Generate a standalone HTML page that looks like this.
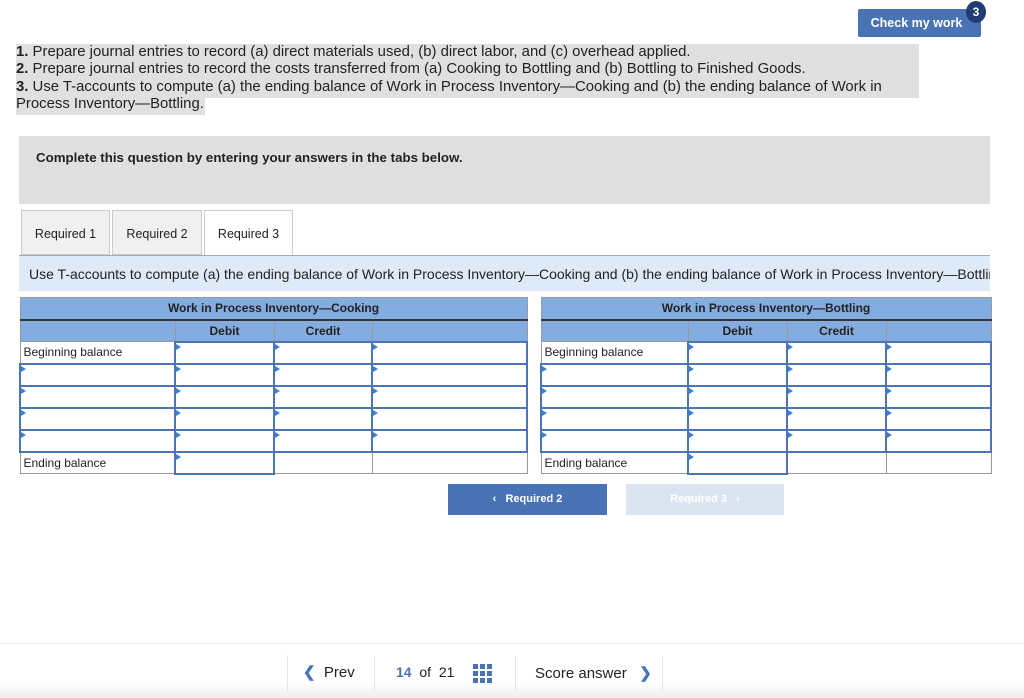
<!DOCTYPE html>
<html><head><meta charset="utf-8"><style>
*{box-sizing:border-box;margin:0;padding:0}
body{width:1024px;height:698px;background:#fff;font-family:"Liberation Sans",Arial,sans-serif;color:#222;position:relative;overflow:hidden}
.abs{position:absolute}
.btn{left:858px;top:9px;width:123px;height:28px;background:#4a73b5;color:#fff;font-weight:bold;font-size:12.5px;border-radius:2px;text-align:center;line-height:28px;padding-right:6px}
.badge{left:966px;top:1px;width:20px;height:22px;border-radius:50%;background:#1f3d73;color:#fff;font-size:12px;font-weight:bold;text-align:center;line-height:22px}
.qbg1{left:16px;top:44px;width:903px;height:54px;background:#e0e0e0}
.qbg2{left:16px;top:98px;width:189px;height:17px;background:#e0e0e0}
.q{left:16px;top:44px;font-size:14.9px;line-height:17.3px;white-space:nowrap}
.gray{left:19px;top:136px;width:971px;height:68px;background:#e0e0e0;border-bottom:1px solid #ddd}
.gray b{position:absolute;left:17px;top:14px;font-size:13.3px}
.tab{top:210px;height:45px;border:1px solid #ccc;background:#f0f0f0;font-size:12.5px;text-align:center;line-height:46px}
.inst{left:19px;top:255px;width:971px;height:36px;background:#deeaf7;border-top:1px solid #aaa;font-size:14px;padding-left:10px;line-height:36px;white-space:nowrap;overflow:hidden}
table{position:absolute;border-collapse:collapse;table-layout:fixed;font-size:12px}
td{height:22px;border:1px solid #999;padding:0;position:relative}
.h td{background:#85ace0;font-weight:bold;text-align:center;border-color:#999}
.h1 td{border-bottom:2px solid #333}
.l{padding-left:3px}
.i{border:2px solid #4d74b4;background:#fff}
.i:before{content:"";position:absolute;left:0;top:1px;border-left:5px solid #3a7fd5;border-top:3px solid transparent;border-bottom:3px solid transparent}
.nav{top:484px;height:31px;color:#fff;font-size:11px;font-weight:bold;text-align:center;line-height:31px}
.foot{left:0;top:643px;width:1024px;height:55px;border-top:1px solid #eee;background:linear-gradient(#fff 70%,#eee)}
.sep{top:655px;width:1px;height:36px;background:#e5e5e5}
</style></head><body>
<div class="abs btn">Check my work</div><div class="abs badge">3</div>
<div class="abs qbg1"></div><div class="abs qbg2"></div>
<div class="abs q"><b>1.</b> Prepare journal entries to record (a) direct materials used, (b) direct labor, and (c) overhead applied.<br><b>2.</b> Prepare journal entries to record the costs transferred from (a) Cooking to Bottling and (b) Bottling to Finished Goods.<br><b>3.</b> Use T-accounts to compute (a) the ending balance of Work in Process Inventory—Cooking and (b) the ending balance of Work in<br>Process Inventory—Bottling.</div>
<div class="abs gray"><b>Complete this question by entering your answers in the tabs below.</b></div>
<div class="abs tab" style="left:21px;width:89px">Required 1</div>
<div class="abs tab" style="left:112px;width:90px">Required 2</div>
<div class="abs tab" style="left:204px;width:89px;background:#fff;border-bottom:none;height:46px">Required 3</div>
<div class="abs inst">Use T-accounts to compute (a) the ending balance of Work in Process Inventory—Cooking and (b) the ending balance of Work in Process Inventory—Bottling.</div>

<table style="left:19px;top:297px;width:507px">
<colgroup><col style="width:155px"><col style="width:99px"><col style="width:98px"><col style="width:155px"></colgroup>
<tr class="h h1"><td colspan="4">Work in Process Inventory—Cooking</td></tr>
<tr class="h"><td></td><td>Debit</td><td>Credit</td><td></td></tr>
<tr><td class="l">Beginning balance</td><td class="i"></td><td class="i"></td><td class="i"></td></tr>
<tr><td class="i"></td><td class="i"></td><td class="i"></td><td class="i"></td></tr>
<tr><td class="i"></td><td class="i"></td><td class="i"></td><td class="i"></td></tr>
<tr><td class="i"></td><td class="i"></td><td class="i"></td><td class="i"></td></tr>
<tr><td class="i"></td><td class="i"></td><td class="i"></td><td class="i"></td></tr>
<tr><td class="l">Ending balance</td><td class="i"></td><td></td><td></td></tr>
</table>
<table style="left:540px;top:297px;width:450px">
<colgroup><col style="width:147px"><col style="width:99px"><col style="width:99px"><col style="width:105px"></colgroup>
<tr class="h h1"><td colspan="4">Work in Process Inventory—Bottling</td></tr>
<tr class="h"><td></td><td>Debit</td><td>Credit</td><td></td></tr>
<tr><td class="l">Beginning balance</td><td class="i"></td><td class="i"></td><td class="i"></td></tr>
<tr><td class="i"></td><td class="i"></td><td class="i"></td><td class="i"></td></tr>
<tr><td class="i"></td><td class="i"></td><td class="i"></td><td class="i"></td></tr>
<tr><td class="i"></td><td class="i"></td><td class="i"></td><td class="i"></td></tr>
<tr><td class="i"></td><td class="i"></td><td class="i"></td><td class="i"></td></tr>
<tr><td class="l">Ending balance</td><td class="i"></td><td></td><td></td></tr>
</table>

<div class="abs nav" style="left:448px;width:159px;background:#4a73b5">&lsaquo;&nbsp;&nbsp;&nbsp;Required 2</div>
<div class="abs nav" style="left:626px;width:158px;background:#dbe5f2">Required 3&nbsp;&nbsp;&nbsp;&rsaquo;</div>

<div class="abs foot"></div>
<div class="abs sep" style="left:287px"></div>
<div class="abs sep" style="left:374px"></div>
<div class="abs sep" style="left:515px"></div>
<div class="abs sep" style="left:662px"></div>
<div class="abs" style="left:303px;top:663px;font-size:15px"><span style="color:#4a73b5;font-weight:bold">&#x276E;</span>&nbsp; Prev</div>
<div class="abs" style="left:396px;top:664px;font-size:14px"><b style="color:#4a73b5">14</b>&nbsp; of&nbsp; 21</div>
<svg class="abs" style="left:473px;top:664px" width="19" height="19" viewBox="0 0 19 19" fill="#4a73b5">
<rect x="0" y="0" width="5" height="5"/><rect x="7" y="0" width="5" height="5"/><rect x="14" y="0" width="5" height="5"/>
<rect x="0" y="7" width="5" height="5"/><rect x="7" y="7" width="5" height="5"/><rect x="14" y="7" width="5" height="5"/>
<rect x="0" y="14" width="5" height="5"/><rect x="7" y="14" width="5" height="5"/><rect x="14" y="14" width="5" height="5"/></svg>
<div class="abs" style="left:535px;top:664px;font-size:15px">Score answer&nbsp;&nbsp; <span style="color:#4a73b5;font-weight:bold">&#x276F;</span></div>
</body></html>
